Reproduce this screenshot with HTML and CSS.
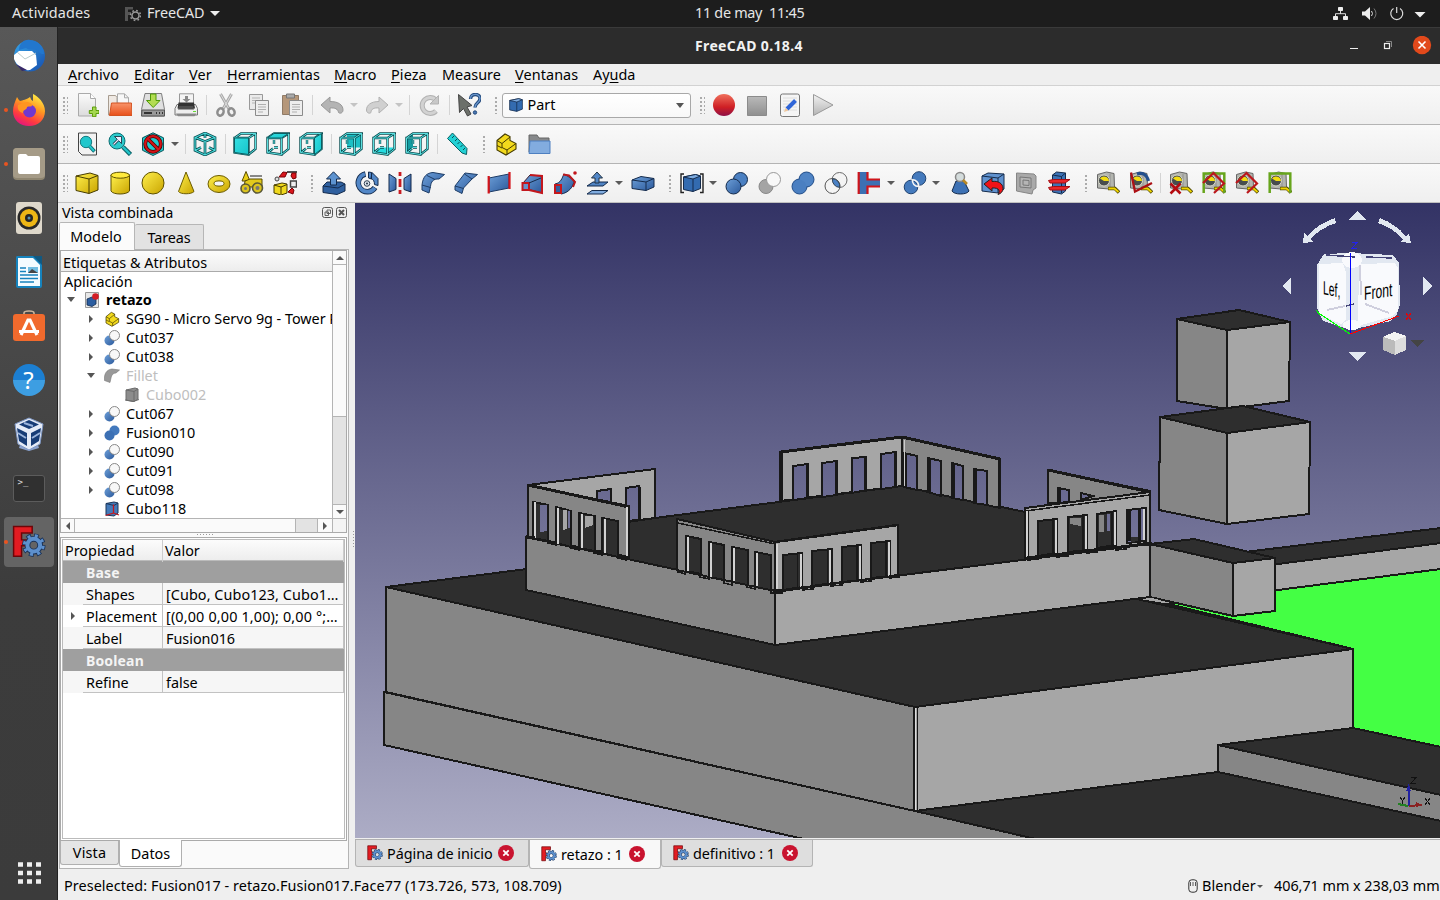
FILE: index.html
```html
<!DOCTYPE html>
<html lang="es">
<head>
<meta charset="utf-8">
<title>FreeCAD 0.18.4</title>
<link rel="stylesheet" href="styles.css">
</head>
<body>
<svg class="defs" width="0" height="0" aria-hidden="true">
<defs>
<linearGradient id="gy" x1="0" y1="0" x2="1" y2="1"><stop offset="0" stop-color="#fff04d"/><stop offset="1" stop-color="#c9a400"/></linearGradient>
<linearGradient id="gb" x1="0" y1="0" x2="1" y2="1"><stop offset="0" stop-color="#6d9fd8"/><stop offset="1" stop-color="#2b599b"/></linearGradient>
<linearGradient id="gt" x1="0" y1="0" x2="1" y2="1"><stop offset="0" stop-color="#34e0e2"/><stop offset="1" stop-color="#16c4cb"/></linearGradient>
<linearGradient id="gr" x1="0" y1="0" x2="0" y2="1"><stop offset="0" stop-color="#f0705c"/><stop offset=".6" stop-color="#cf1f24"/><stop offset="1" stop-color="#8d1048"/></linearGradient>
<linearGradient id="gg" x1="0" y1="0" x2="0" y2="1"><stop offset="0" stop-color="#f2f2f2"/><stop offset="1" stop-color="#b4b4b4"/></linearGradient>
<linearGradient id="gw" x1="0" y1="0" x2="0" y2="1"><stop offset="0" stop-color="#fbfbfb"/><stop offset="1" stop-color="#dcdcdc"/></linearGradient>
<linearGradient id="gd" x1="0" y1="0" x2="0" y2="1"><stop offset="0" stop-color="#b9b9b9"/><stop offset="1" stop-color="#8f8f8f"/></linearGradient>
<linearGradient id="go" x1="0" y1="0" x2="0" y2="1"><stop offset="0" stop-color="#f8956b"/><stop offset="1" stop-color="#e8501a"/></linearGradient>
<linearGradient id="gfx" x1=".8" y1="0" x2=".3" y2="1"><stop offset="0" stop-color="#fff44a"/><stop offset=".4" stop-color="#ff9a22"/><stop offset=".75" stop-color="#ff3b3f"/><stop offset="1" stop-color="#e31580"/></linearGradient>
<linearGradient id="gtb" x1="0" y1="0" x2="1" y2="1"><stop offset="0" stop-color="#35a5ea"/><stop offset="1" stop-color="#174fae"/></linearGradient>

<symbol id="i-new" viewBox="0 0 24 24"><path d="M3.500.5h12l5 5v17.500h-17z" fill="url(#gw)" stroke="#aaa"/><path d="M15.500.5v5h5" fill="#fff" stroke="#aaa"/><path d="M17.500 14h3.500v3.500h3v3h-3v3.200h-3.500v-3.200h-3.200v-3h3.200z" fill="#a5d84f" stroke="#5d9e0c"/></symbol>
<symbol id="i-open" viewBox="0 0 24 24"><path d="M.5 22V2.500h7l1.500 2v17z" fill="#efe9e3" stroke="#a79c90"/><path d="M9.500 10V.8h7l4 4V12z" fill="#f8f8f8" stroke="#aaa"/><path d="M16.500.8v4h4" fill="none" stroke="#aaa"/><path d="M1.500 22.500l2-12.500h20l.5 12.500z" fill="url(#go)" stroke="#d45321"/></symbol>
<symbol id="i-save" viewBox="0 0 24 24"><path d="M4 .5h16.500l3 16v6.500H.5v-6.500z" fill="#e0e0e0" stroke="#7e7e7e"/><path d="M1 17h22.500v6H.5z" fill="#9a9a9a" stroke="#555"/><path d="M3 20h8m4 0h1m2 0h1m2 0h1" stroke="#333" stroke-width="2"/><path d="M9.500 1h5.500v6.500h4L12.200 14.500 5.500 7.500h4z" fill="#b3dc52" stroke="#4e9a06"/></symbol>
<symbol id="i-print" viewBox="0 0 24 24"><path d="M5.500.8h14V13h-14z" fill="#f4f4f4" stroke="#999"/><path d="M11 3h3v3h2.500l-4 3.500-4-3.500H11z" fill="#888"/><path d="M3 11.500h18.500l2 4v6.500H1v-6.500z" fill="#eee" stroke="#777"/><path d="M4.500 9.500h15.500l1 6H3.500z" fill="#333"/><path d="M5 13h14l1 3.500H4z" fill="#4e4e4e"/><path d="M2 20.500h20.500l-2 2.700H4z" fill="#888"/><path d="M19 18.500h3" stroke="#6d3"/></symbol>
<symbol id="i-cut" viewBox="0 0 24 24"><path d="M6.500 1l8.500 15M17.500 1L9 16" stroke="#a9a9a9" stroke-width="3" fill="none"/><path d="M6.500 1l8.500 15M17.500 1L9 16" stroke="#dcdcdc" stroke-width="1"/><g fill="none" stroke="#8d8d8d" stroke-width="2.500"><ellipse cx="6.500" cy="19" rx="3" ry="3.700" transform="rotate(20 6.500 19)"/><ellipse cx="17.500" cy="19" rx="3" ry="3.700" transform="rotate(-20 17.500 19)"/></g></symbol>
<symbol id="i-copy" viewBox="0 0 24 24"><path d="M2.500 1.500h13v15h-13z" fill="#eaeaea" stroke="#999"/><path d="M5 5h8M5 7.500h8M5 10h8" stroke="#b5b5b5"/><path d="M8.500 7.500h13v15h-13z" fill="#eee" stroke="#8b8b8b"/><path d="M11 11.500h8M11 14h8M11 16.500h8M11 19h5" stroke="#b0b0b0"/></symbol>
<symbol id="i-paste" viewBox="0 0 24 24"><path d="M2.500 2.500h16v19h-16z" fill="#b5977a" stroke="#8f7a66"/><path d="M6.500 1h8v4h-8z" fill="#aaa" stroke="#777"/><path d="M9.500 7.500h13v15h-13z" fill="#eee" stroke="#8b8b8b"/><path d="M12 11.500h8M12 14h8M12 16.500h8M12 19h5" stroke="#b0b0b0"/></symbol>
<symbol id="i-undo" viewBox="0 0 24 24"><path d="M1 12l9-8v4.500c8 0 13 3 13 8.500 0 3-3 4-4.500 2.500C18 16 15 14.500 10 15v5z" fill="#b4b4b4" stroke="#999"/></symbol>
<symbol id="i-redo" viewBox="0 0 24 24"><path d="M23 12l-9-8v4.500C6 8.500 1.500 12 1.500 17c0 3 3 4 4.500 2.500C6 16 9 14.500 14 15v5z" fill="#d0d0d0" stroke="#b1b1b1"/></symbol>
<symbol id="i-refresh" viewBox="0 0 24 24"><path d="M19 7A8 8 0 1 0 19 18" fill="none" stroke="#b2b2b2" stroke-width="5"/><path d="M19 7A8 8 0 1 0 19 18" fill="none" stroke="#d2d2d2" stroke-width="3"/><path d="M21.500 2.500v8.500h-8.500z" fill="#c8c8c8" stroke="#b2b2b2"/></symbol>
<symbol id="i-what" viewBox="0 0 24 24"><path d="M1.500 1.500l13.500 11-5 1.500 4 7-3.500 2-4-7.500-4 4z" fill="#6c706a" stroke="#444"/><path d="M13.500 6c0-6 9.500-6 9.500-.5 0 4.500-5 4-5 9" fill="none" stroke="#234a7d" stroke-width="3.400"/><path d="M13.500 6c0-6 9.500-6 9.500-.5 0 4.500-5 4-5 9" fill="none" stroke="#6a97cd" stroke-width="1.300"/><circle cx="18" cy="19.500" r="1.700" fill="#4a78b5" stroke="#234a7d"/></symbol>
<symbol id="i-rec" viewBox="0 0 24 24"><circle cx="12" cy="12" r="11" fill="url(#gr)"/></symbol>
<symbol id="i-stop" viewBox="0 0 24 24"><path d="M2.500 3.500h19v19h-19z" fill="url(#gd)" stroke="#8b8b8b"/></symbol>
<symbol id="i-edit" viewBox="0 0 24 24"><rect x="2.500" y="1" width="19" height="22.500" rx="2" fill="#f5f5f5" stroke="#777"/><path d="M5 5h14M5 8h14M5 11h14M5 14h14M5 17h14" stroke="#dedede"/><path d="M9 16L17.500 7.500" stroke="#2f65d8" stroke-width="4"/><path d="M10.500 17.500L6 19l1.500-4z" fill="#efc79b"/></symbol>
<symbol id="i-play" viewBox="0 0 24 24"><path d="M2.500 1.500L22 12 2.500 22.500z" fill="url(#gg)" stroke="#999"/></symbol>

<symbol id="i-fit" viewBox="0 0 24 24"><path d="M3.500 1h18v22H7l-3.500-3.500z" fill="#f2f2f2" stroke="#444"/><circle cx="11" cy="10" r="5.700" fill="#21c7cc" stroke="#127b80"/><path d="M14.500 14l5 5.500" stroke="#0b6569" stroke-width="3.600"/><path d="M14.500 14l4.500 5" stroke="#21c7cc" stroke-width="2"/></symbol>
<symbol id="i-sel" viewBox="0 0 24 24"><circle cx="9" cy="9" r="8" fill="#2bcacc" stroke="#0d6e73"/><path d="M15 15l7.500 7.500" stroke="#0d6267" stroke-width="4.500"/><path d="M15 15l7 7" stroke="#20c4c8" stroke-width="2.400"/><path d="M5.500 12.500l5-5" stroke="#123" stroke-width="2.600"/><path d="M6.500 4.500h7v7z" fill="#eef" stroke="#123" stroke-width=".8"/><path d="M5.500 12.500l5-5" stroke="#eef" stroke-width="1.200"/></symbol>
<symbol id="i-nodraw" viewBox="0 0 24 24"><path d="M12 .8l10.500 5v12.500L12 23.500 1.500 18.300V5.800z" fill="#22c8cd" stroke="#0b555a"/><circle cx="12" cy="12" r="7.800" fill="none" stroke="#4b0000" stroke-width="3.800"/><path d="M6.500 6.500l11 11" stroke="#4b0000" stroke-width="3.800"/><circle cx="12" cy="12" r="7.800" fill="none" stroke="#d31217" stroke-width="2.200"/><path d="M6.500 6.500l11 11" stroke="#d31217" stroke-width="2.200"/></symbol>
<symbol id="i-iso" viewBox="0 0 24 24"><path d="M12 1l10 4.500v13l-10 4.500-10-4.500v-13zM2 5.500l10 4 10-4M12 9.500V23M2 18.500l6-3M22 18.500l-6-3M12 1v5" fill="none" stroke="#0a4e52" stroke-width="2.700"/><path d="M12 1l10 4.500v13l-10 4.500-10-4.500v-13zM2 5.500l10 4 10-4M12 9.500V23M2 18.500l6-3M22 18.500l-6-3M12 1v5" fill="none" stroke="#4bdcdc" stroke-width="1.100"/></symbol>
<symbol id="wire" viewBox="0 0 24 24"><path id="wp" d="M1.500 6h14v16.500l-14-2zM1.500 6L8 1.500h14.500L15.500 6M22.500 1.500V17l-7 5.500M8 8v4M8 15.500h4M7 16.500l-5 4" fill="none" stroke="#0a4e52" stroke-width="2.400"/><path d="M1.500 6h14v16.500l-14-2zM1.500 6L8 1.500h14.500L15.500 6M22.500 1.500V17l-7 5.500M8 8v4M8 15.500h4M7 16.500l-5 4" fill="none" stroke="#5be0e0" stroke-width="1"/></symbol>
<symbol id="i-front" viewBox="0 0 24 24"><use href="#wire"/><path d="M1.500 6h14v16.500l-14-2z" fill="url(#gt)" stroke="#0a5e62"/></symbol>
<symbol id="i-top" viewBox="0 0 24 24"><use href="#wire"/><path d="M1.500 6L8 1.500h14.500L15.500 6z" fill="url(#gt)" stroke="#0a5e62"/></symbol>
<symbol id="i-right" viewBox="0 0 24 24"><use href="#wire"/><path d="M22.500 1.500V17l-7 5.500V6z" fill="url(#gt)" stroke="#0a5e62"/></symbol>
<symbol id="i-rear" viewBox="0 0 24 24"><path d="M8 2h14v13.500H8z" fill="#1bc0c5"/><use href="#wire"/></symbol>
<symbol id="i-bottom" viewBox="0 0 24 24"><path d="M8 15.500h14l-6.500 6.500-14-2z" fill="#25dce0"/><use href="#wire"/></symbol>
<symbol id="i-left" viewBox="0 0 24 24"><path d="M1.500 6L8 1.500v14l-6.500 5z" fill="#139da2"/><use href="#wire"/></symbol>
<symbol id="i-ruler" viewBox="0 0 24 24"><path d="M7.500 1L22 16.500 21.500 22.500 17 21 2.500 6.500z" fill="#22d0d4" stroke="#0a6064"/><path d="M9 4L7 6M12 7l-2 2M14.500 10l-2 2M17.500 13l-2 2M20 16l-2 2" stroke="#0a4e52"/></symbol>
<symbol id="i-part" viewBox="0 0 24 24"><path d="M3 8.500l8-6.500 5 2.500v4l6 3v5.500l-10 6-9-5z" fill="#f2d91c" stroke="#453b00" stroke-width="1.100"/><path d="M3 8.500l5 3 8-6.500M8 11.500v4l5 2.500 9-6.500M3 13.500l5 2.500M13 18v4.500" fill="none" stroke="#453b00"/></symbol>
<symbol id="i-group" viewBox="0 0 24 24"><path d="M2 3h8l2 3h10v14H2z" fill="#87898b" stroke="#666"/><path d="M3 9h20v12.500H2z" fill="#82acdf" stroke="#4d7fc0"/></symbol>

<symbol id="i-ybox" viewBox="0 0 24 24"><path d="M1 5l14-3 8 2.500V19l-9 3.500L1 19.500z" fill="url(#gy)" stroke="#463c00"/><path d="M1 5l13 3 9-3.500M14 8v14" fill="none" stroke="#463c00"/></symbol>
<symbol id="i-cyl" viewBox="0 0 24 24"><path d="M3 4v16c2 4 16 4 18.500 0V4z" fill="url(#gy)" stroke="#5e5100"/><ellipse cx="12.200" cy="4.200" rx="9.300" ry="3" fill="#ffea3c" stroke="#5e5100"/></symbol>
<symbol id="i-sph" viewBox="0 0 24 24"><circle cx="12" cy="12" r="11" fill="url(#gy)" stroke="#5e5100"/></symbol>
<symbol id="i-cone" viewBox="0 0 24 24"><path d="M12 1L4.500 20.500c2 3 13 3 15.500 0z" fill="url(#gy)" stroke="#6b5c00"/></symbol>
<symbol id="i-torus" viewBox="0 0 24 24"><ellipse cx="12" cy="13" rx="11" ry="8.500" fill="url(#gy)" stroke="#6b5c00"/><ellipse cx="12" cy="12.500" rx="5" ry="2.600" fill="#f6f6f6" stroke="#6b5c00"/></symbol>
<symbol id="i-prim" viewBox="0 0 24 24"><path d="M6 .5L2 10h8z" fill="#e9cf18" stroke="#574b00"/><path d="M10 5h12" stroke="#888" stroke-width="2"/><path d="M10 8h12v8H4l1-6z" fill="#e3ca1c" stroke="#574b00"/><g fill="#dcc41d" stroke="#5b5938" stroke-width="1.600"><circle cx="5.500" cy="17.500" r="4.500"/><circle cx="17.500" cy="17" r="5"/></g><circle cx="17.500" cy="17" r="2" fill="#777"/><circle cx="5.500" cy="17.500" r="1.500" fill="#777"/></symbol>
<symbol id="i-shape" viewBox="0 0 24 24"><path d="M1 14l8-2 5 1v9l-6 2-7-2z" fill="#f0d91e" stroke="#463c00"/><path d="M1 14l7 2 6-2.500M8 16v7" fill="none" stroke="#463c00"/><path d="M14 1h10" stroke="#333" stroke-width="1.700"/><path d="M17.500 10h6v6h-6z" fill="#eee" stroke="#444" stroke-width="1.500"/><circle cx="4" cy="8" r="2" fill="#ddd" stroke="#444"/><path d="M6 6l4-5 4 .5-2 4.500zM19 2h4v5l-3 1-2-3zM15 21l4-4 2 2-1 4z" fill="#d9161c" stroke="#7a0004"/></symbol>
<symbol id="i-extrude" viewBox="0 0 24 24"><path d="M1 15l4-4h14l4 2v7l-8 3.500-14-2z" fill="#2f609f" stroke="#142b4c"/><path d="M1 15l15 2 7-4" fill="none" stroke="#142b4c"/><path d="M8.500 14V8H4.500L11.500 .8 18.500 8h-4v6z" fill="#5d93d0" stroke="#142b4c"/></symbol>
<symbol id="i-revolve" viewBox="0 0 24 24"><path d="M10.500 3A9 9 0 1 0 20 16.500" fill="none" stroke="#142b4c" stroke-width="5.500"/><path d="M10 3A9 9 0 1 0 19.800 16.800" fill="none" stroke="#5287c7" stroke-width="3.800"/><path d="M13.500 1l3 .5V8l-3-1zM17 1.500l6 6v7l-3.500-1c0-3-1-5-3.500-6z" fill="#5287c7" stroke="#142b4c"/><circle cx="12" cy="12.500" r="2.800" fill="#dfe6ee" stroke="#345"/><circle cx="12" cy="12.500" r="1" fill="#234"/></symbol>
<symbol id="i-mirror" viewBox="0 0 24 24"><path d="M1 3l7 4.500v11L1 21z" fill="url(#gb)" stroke="#142b4c"/><path d="M23 3l-7 4.500v11l7 2.500z" fill="url(#gb)" stroke="#142b4c"/><path d="M12 1v4M12 8v8M12 19v4" stroke="#c81b20" stroke-width="2.800"/></symbol>
<symbol id="i-fillet" viewBox="0 0 24 24"><path d="M1 14C2 5 6 2 12 1.500L23.500 3.500 18 8c-6-.5-8 3-8.500 7.500L8 22l-7-3z" fill="url(#gb)" stroke="#1d3c66"/><path d="M1 14l8.500 2.500M6 4.500l8 4" stroke="#1d3c66" fill="none"/></symbol>
<symbol id="i-chamfer" viewBox="0 0 24 24"><path d="M1 15L11 2l12.500 1.500L18 8 9.500 17 8 22.500 1 19z" fill="url(#gb)" stroke="#1d3c66"/><path d="M1 15l8.500 2.500M10.500 3L18 8" stroke="#1d3c66" fill="none"/></symbol>
<symbol id="i-ruled" viewBox="0 0 24 24"><path d="M2 7l20-4v14L2 21z" fill="url(#gb)" stroke="#1d3c66"/><path d="M1.700 5v17.500M22.500 1v17" stroke="#d4151b" stroke-width="2.200"/></symbol>
<symbol id="i-loft" viewBox="0 0 24 24"><path d="M3 12l7-8 12 1v17l-15-4z" fill="url(#gb)" stroke="#3d1a2c"/><path d="M10 4l12 1v17l-13-3" fill="none" stroke="#c3171d" stroke-width="2"/><path d="M2.500 12h6.500v7h-6.500z" fill="#6794cb" stroke="#c3171d" stroke-width="2"/><path d="M9 12l12-5" stroke="#142b4c"/></symbol>
<symbol id="i-sweep" viewBox="0 0 24 24"><path d="M2 13C8 12 9 7 11 3l10 6c0 7-6 13-13 14z" fill="url(#gb)" stroke="#142b4c"/><path d="M2 14h6v8H2z" fill="#335f9e" stroke="#c3171d" stroke-width="2"/><path d="M10 3.500l6 1 6 6.500-2 5" fill="none" stroke="#b9181e" stroke-width="2"/><circle cx="22" cy="2" r="1.800" fill="#c3171d"/></symbol>
<symbol id="i-offset" viewBox="0 0 24 24"><path d="M1 15l6-4h15l-5 4z" fill="#4f83c3" stroke="#142b4c"/><path d="M1 23l5-3.500h16L17 23z" fill="#80acdf" stroke="#142b4c"/><path d="M9 12V7H5.500L11 1l5.500 6H13v5z" fill="#5287c7" stroke="#234"/></symbol>
<symbol id="i-thick" viewBox="0 0 24 24"><path d="M1 9l9-3.500 13 2V16l-8 3.500-14-2z" fill="url(#gb)" stroke="#142b4c"/><path d="M1 9l14 2 8-3.500M15 11v8.500" fill="none" stroke="#142b4c"/></symbol>
<symbol id="i-bbox" viewBox="0 0 24 24"><path d="M3.500 6l12-2.500 5 1.500v12.500L13 20.500l-9.500-2z" fill="#336bb0" stroke="#142b4c"/><path d="M3.500 6l12-2.500L20.500 5 13 8z" fill="#7dabe0" stroke="#142b4c"/><path d="M13 8v12.500" stroke="#142b4c"/></symbol>
<symbol id="i-compound" viewBox="0 0 24 24"><use href="#i-bbox"/><path d="M4 3H1v18.500h3M20 3h3v18.500h-3" fill="none" stroke="#222" stroke-width="1.400"/></symbol>
<symbol id="i-bool" viewBox="0 0 24 24"><circle cx="15.500" cy="8.500" r="7" fill="#4b80c2" stroke="#142b4c"/><circle cx="8.500" cy="15.500" r="7.500" fill="url(#gb)" stroke="#142b4c"/></symbol>
<symbol id="i-cutg" viewBox="0 0 24 24"><circle cx="8" cy="15.500" r="7" fill="#a4a4a4" stroke="#888"/><circle cx="15.500" cy="8.500" r="7" fill="#f8f8f8" stroke="#999"/></symbol>
<symbol id="i-fuse" viewBox="0 0 24 24"><circle cx="15.500" cy="8.500" r="7.500" fill="#3f72b4" stroke="#24508b"/><circle cx="8.500" cy="15.500" r="7.500" fill="#3f72b4" stroke="#24508b"/><circle cx="15.500" cy="8.500" r="6.800" fill="#4f84c5"/><circle cx="8.500" cy="15.500" r="6.800" fill="#4a7fc1"/></symbol>
<symbol id="i-common" viewBox="0 0 24 24"><circle cx="15.500" cy="9" r="7.500" fill="#f4f4f4" stroke="#6a6a6a"/><circle cx="8.500" cy="15" r="7.500" fill="#f4f4f4" stroke="#555"/><path d="M8.500 7.700a7.500 7.500 0 0 1 7.200 8.700 7.500 7.500 0 0 1-7.200-8.700z" fill="#4a80c4" stroke="#345"/></symbol>
<symbol id="i-connect" viewBox="0 0 24 24"><path d="M1.500 1v22h9v-7.500H23V8H10.500V1z" fill="#3c70b3"/><path d="M1.700 1v22M10.500 1v7.500H23M10.500 23v-7.500H23" fill="none" stroke="#cf151b" stroke-width="2.200"/></symbol>
<symbol id="i-split" viewBox="0 0 24 24"><circle cx="16" cy="7.500" r="6.800" fill="#447abd" stroke="#1f4270"/><circle cx="8" cy="16" r="6.800" fill="#447abd" stroke="#1f4270"/><path d="M8.500 9c4-1 8 3 7 7M9.500 8.500a6 6 0 0 0 6 7" fill="none" stroke="#f5f5f5" stroke-width="1.600"/></symbol>
<symbol id="i-check" viewBox="0 0 24 24"><path d="M8 10h8l5 10c-2 4-15 4-17 0z" fill="#3d71b4" stroke="#142b4c"/><circle cx="12" cy="6" r="4.500" fill="#d4dcdc" stroke="#888" stroke-width="1.500"/><path d="M15 9l4 4" stroke="#b98a24" stroke-width="2.500"/></symbol>
<symbol id="i-defeat" viewBox="0 0 24 24"><path d="M1 5l6-3 16 1v15l-6 4-16-2z" fill="#6092cf" stroke="#142b4c"/><path d="M1 5l16 2 6-4M17 7v15" stroke="#142b4c" fill="none"/><path d="M3 13l8-6v3.500c6-1 11 2 11 7 0 3-2 5-5 6 2-3 2-7-6-6.500V20z" fill="#f01318" stroke="#222"/></symbol>
<symbol id="i-section" viewBox="0 0 24 24"><path d="M2.500 2L20 3l2 2v12l-3 2-1 4-15.500-3z" fill="#a9a9a9" stroke="#868686"/><path d="M6 6l11 1v10L6 16zM9 9l6 .5v5L9 14z" fill="#b5b5b5" stroke="#777"/></symbol>
<symbol id="i-slices" viewBox="0 0 24 24"><path d="M5.500 4l4-3 9 1v18l-4 3-9-2z" fill="#3c72b5" stroke="#142b4c"/><path d="M5.500 4l9 1.500 4-3.500M14.500 5.500V22" fill="none" stroke="#142b4c"/><path d="M1.500 9.500l5-1h16.500l-5 3.500H3zM1.500 16.500l5-1h16.500l-5 3.500H3z" fill="#e8262b" stroke="#a60f13"/></symbol>
<symbol id="i-tape" viewBox="0 0 24 24"><path d="M1.500 3.500l9-2.500 7.500 1.500.5 14L13 18l-11.500-1z" fill="#b3b5af" stroke="#666"/><path d="M14 3v14" stroke="#888" stroke-width=".8"/><circle cx="8" cy="9.500" r="5.500" fill="#474d4e" stroke="#d9d9c8"/><path d="M4 7.500a5 5 0 0 1 9 2.500H8z" fill="#f3dc12"/><path d="M12 17.500h7l4 4" fill="none" stroke="#4f4800" stroke-width="3.500"/><path d="M12.500 17.500h6l4 3.500" fill="none" stroke="#f0d400" stroke-width="1.800"/></symbol>
<symbol id="i-tape2" viewBox="0 0 24 24"><use href="#i-tape"/><path d="M8 3c6-2 10 1 11.500 7" fill="none" stroke="#234f8d" stroke-width="3.200"/><path d="M2 1.500l4 19L23 12" fill="none" stroke="#ac1015" stroke-width="2.300"/></symbol>
<symbol id="i-tapex" viewBox="0 0 24 24"><use href="#i-tape"/><path d="M1.500 12.500l10 10M11.500 12.500l-10 10" stroke="#b50c11" stroke-width="2.600"/></symbol>
<symbol id="i-tapea" viewBox="0 0 24 24"><use href="#i-tape"/><path d="M1.700 22V2.500h20.600V22" fill="none" stroke="#67a51c" stroke-width="2.500"/><path d="M1 12L11.500 2 22 12.500 12 22" fill="none" stroke="#bb171c" stroke-width="2.200"/></symbol>
<symbol id="i-tapeb" viewBox="0 0 24 24"><use href="#i-tape"/><path d="M1 12L11.500 2 22 12.500 12 22" fill="none" stroke="#bb171c" stroke-width="2.200"/></symbol>
<symbol id="i-tapec" viewBox="0 0 24 24"><use href="#i-tape"/><path d="M1.700 22V2.500h20.600V22" fill="none" stroke="#67a51c" stroke-width="2.500"/></symbol>

<symbol id="t-cut" viewBox="0 0 16 16"><circle cx="5.500" cy="10.500" r="5" fill="url(#gb)"/><circle cx="10.500" cy="5.500" r="5" fill="#f8f8f8" stroke="#888"/></symbol>
<symbol id="t-fuse" viewBox="0 0 16 16"><circle cx="10.500" cy="5.500" r="5" fill="#4379bd"/><circle cx="5.500" cy="10.500" r="5" fill="#3c70b4"/></symbol>
<symbol id="t-filletg" viewBox="0 0 16 16"><path d="M.5 9C1 4 4 1.500 8 1L15.500 2 12 5C9 5 7.500 7 7 10l-1 4.500L.5 12.500z" fill="#999" stroke="#777" stroke-width=".6"/></symbol>
<symbol id="t-boxg" viewBox="0 0 16 16"><path d="M2 3l9-2 3 1v10l-4 2.500L2 13z" fill="#8c8c8c" stroke="#6b6b6b"/><path d="M2 3l8 1.500L14 2M10 4.500v9M1 13l8 1.500 6-2" stroke="#6b6b6b" fill="none"/></symbol>
<symbol id="t-boxr" viewBox="0 0 16 16"><path d="M2 2.500l8-1.500 4 1v10l-4 3-8-1z" fill="#447ab9" stroke="#1b3559"/><path d="M2 2.500l8 2 4-2.500" fill="none" stroke="#1b3559"/><path d="M9.500 3.500v8.500L1.500 14.500M9.500 12l5.500 2" stroke="#c01920" stroke-width="1.300" fill="none"/></symbol>
<symbol id="t-doc" viewBox="0 0 16 16"><path d="M1.500.5h13v15h-13z" fill="#e8e8e8" stroke="#999"/><path d="M3 7l5-2 4 1.500V12l-4 2.500-5-1.500z" fill="#2b5da0" stroke="#142b4c" stroke-width=".8"/><circle cx="11.500" cy="4.500" r="3.300" fill="#d31d25"/></symbol>
<symbol id="fc" viewBox="0 0 32 32"><path d="M1.500 1.500h17.500v6H9v6.500h6.500v5.500H9v10H1.500z" fill="#e31c22" stroke="#6e0508" stroke-width="1.400"/><g fill="none" stroke="#1b3358"><circle cx="20.500" cy="19" r="6" stroke-width="5.500"/><circle cx="20.500" cy="19" r="8.800" stroke-width="4.600" stroke-dasharray="4.200 2.711"/></g><g fill="none" stroke="#5d90cd"><circle cx="20.500" cy="19" r="6" stroke-width="3.700"/><circle cx="20.500" cy="19" r="8.800" stroke-width="3" stroke-dasharray="2.800 4.111" stroke-dashoffset="-.7"/></g></symbol>
<symbol id="fcg" viewBox="0 0 16 16"><path d="M0 1h8v2.500H3V6h3v3H3v6H0z" fill="#555"/><circle cx="10.500" cy="9.500" r="3.500" fill="none" stroke="#999" stroke-width="1.500"/><circle cx="10.500" cy="9.500" r="5" fill="none" stroke="#999" stroke-width="1.500" stroke-dasharray="1.700 2.230"/></symbol>
<symbol id="close" viewBox="0 0 16 16"><circle cx="8" cy="8" r="8" fill="#c9132f"/><path d="M5.300 5.300l5.400 5.400M10.700 5.300l-5.400 5.400" stroke="#fff" stroke-width="1.800"/></symbol>
</defs>
</svg>

<header class="topbar">
  <span class="activities">Actividades</span>
  <svg class="appicon" width="16" height="16"><use href="#fcg"/></svg>
  <span class="appname">FreeCAD</span><i class="tri light"></i>
  <span class="clock">11 de may&nbsp; 11:45</span>
  <svg class="tray" width="100" height="20" viewBox="0 0 100 20"><g fill="#eee"><rect x="11" y="3" width="5" height="4" rx=".8"/><rect x="6" y="12" width="5" height="4" rx=".8"/><rect x="16" y="12" width="5" height="4" rx=".8"/><path d="M35 7.500h3L43 3v13l-5-4.500h-3z"/><path d="M87.500 8h11L93 13.500z"/></g><path d="M13.500 7v3M8.500 12V9.700h10V12M44.500 7q2 2.500 0 5" fill="none" stroke="#ddd"/><path d="M47 4.500q4 5 0 10" fill="none" stroke="#777"/><path d="M66.500 4.500a6 6 0 1 0 6.500 0M69.700 3v6" fill="none" stroke="#ddd" stroke-width="1.200"/></svg>
</header>

<div class="desktop">
<nav class="dock">
  <div class="app"><svg width="34" height="34" viewBox="0 0 34 34"><circle cx="17.500" cy="17" r="15.500" fill="url(#gtb)"/><path d="M7 11C7 3 14 0 18 1c7 0 14 6 14 14-3 0-5 0-5-3-4-3-10 0-13-3z" fill="#2277ce"/><path d="M2 16l5-4 13 0 4 4 1 10-7 5C11 32 5 27 2 20z" fill="#fff"/><path d="M5 13l8 7 11-6" fill="none" stroke="#bcc"/><path d="M4 25l11 6-5 1z" fill="#372868"/></svg></div>
  <div class="app run"><svg width="34" height="34" viewBox="0 0 34 34"><path d="M18 4c1 2 1 3 3 4V1c5 2 12 9 12 17 0 9-7 15-16 15S1 27 1 18C1 13 3 9 5 4c1 2 2 3 3 4 3-1 6-1 10-4z" fill="url(#gfx)"/><circle cx="17.500" cy="18" r="6.500" fill="#7138d0"/><path d="M6 12l8-3c4 0 6 2 6 4-2 1-3 0-5 1 0 3-4 2-4 6-4-1-6-4-5-8z" fill="#ff9521"/></svg></div>
  <div class="app run"><svg width="34" height="34" viewBox="0 0 34 34"><rect x="1" y="1" width="32" height="32" rx="4" fill="#8f8671"/><rect x="1" y="1" width="32" height="30" rx="4" fill="#a59b87"/><path d="M6 9q0-2 2-2h6l2 2h10q2 0 2 2v14q0 2-2 2H8q-2 0-2-2z" fill="#fff"/></svg></div>
  <div class="app"><svg width="34" height="34" viewBox="0 0 34 34"><rect x="4" y="1" width="26" height="32" rx="3" fill="#ded8cb"/><circle cx="17" cy="17" r="11.500" fill="#272727"/><circle cx="17" cy="17" r="9" fill="#edb615"/><circle cx="17" cy="17" r="4" fill="#252525"/><circle cx="17" cy="17" r="1.500" fill="#5791b0"/></svg></div>
  <div class="app"><svg width="34" height="34" viewBox="0 0 34 34"><path d="M5 1h17l8 8v22q0 2-2 2H6q-2 0-2-2V3q0-2 1-2z" fill="#1683bd"/><path d="M6 3h15l7 7v21H6z" fill="#f4fbff"/><path d="M21 1h9v9z" fill="#105982"/><path d="M8 13h6M8 16.500h6M8 20h18M8 23.500h18M8 27h14" stroke="#1683bd" stroke-width="1.600"/><path d="M16 12h10v6H16z" fill="#72bde2"/><path d="M16 18l4-4 6 4z" fill="#444"/></svg></div>
  <div class="app"><svg width="34" height="34" viewBox="0 0 34 34"><path d="M12 6V4q0-2 5-2t5 2v2" fill="none" stroke="#ccb59c" stroke-width="1.600"/><rect x="1" y="5" width="32" height="27" rx="3" fill="#f16a2d"/><path d="M9 26l7-15h2l7 15M7 22.500h20" fill="none" stroke="#fff" stroke-width="3.200"/></svg></div>
  <div class="app help"><span>?</span></div>
  <div class="app"><svg width="34" height="34" viewBox="0 0 34 34"><path d="M9 25h16l2 6-10 3-10-3z" fill="#8ba2ce"/><path d="M3 7L17 1l14 6-3 20-11 6-11-6z" fill="#e5ebf7" stroke="#7f98c5"/><path d="M7 7.500L17 3l10 4.500L17 12zM5 11l10 5v13l-8-5zM29 11l-10 5v13l8-5z" fill="#173c76"/><path d="M6 16l8 5M28 16l-8 5M12 6l9 3" stroke="#9bb4dc" stroke-width="2"/></svg></div>
  <div class="app term"><span>&gt;_</span></div>
  <div class="app run active"><svg width="34" height="34"><use href="#fc"/></svg></div>
  <svg class="grid" width="24" height="24" viewBox="0 0 24 24"><path d="M1 3.500h5m4 0h5m4 0h5M1 12h5m4 0h5m4 0h5M1 20.500h5m4 0h5m4 0h5" stroke="#eee" stroke-width="4.500"/></svg>
</nav>

<main class="window">
  <div class="titlebar"><b>FreeCAD 0.18.4</b><svg class="winbtns" width="92" height="20" viewBox="0 0 92 20"><path d="M2 12.500h8" stroke="#eee"/><rect x="36.500" y="7.500" width="5" height="5" fill="none" stroke="#eee" stroke-width="1.200"/><path d="M38 5.500h5.500V11" stroke="#888" fill="none"/><circle cx="74" cy="9" r="9.200" fill="#e2491b"/><path d="M70.500 5.500l7 7M77.500 5.500l-7 7" stroke="#fff" stroke-width="1.600"/></svg></div>
  <div class="menubar"><span class="m1"><u>A</u>rchivo</span><span class="m2"><u>E</u>ditar</span><span class="m3"><u>V</u>er</span><span class="m4"><u>H</u>erramientas</span><span class="m5"><u>M</u>acro</span><span class="m6"><u>P</u>ieza</span><span class="m7">Measure</span><span class="m8"><u>V</u>entanas</span><span class="m9">Ay<u>u</u>da</span></div>

  <div class="toolbar">
    <i class="grip first"></i><svg><use href="#i-new"/></svg><svg><use href="#i-open"/></svg><svg><use href="#i-save"/></svg><svg><use href="#i-print"/></svg><i class="sep"></i><svg><use href="#i-cut"/></svg><svg><use href="#i-copy"/></svg><svg><use href="#i-paste"/></svg><i class="sep"></i><svg><use href="#i-undo"/></svg><i class="dd off"></i><svg><use href="#i-redo"/></svg><i class="dd off"></i><i class="sep"></i><svg><use href="#i-refresh"/></svg><i class="sep"></i><svg><use href="#i-what"/></svg><i class="grip"></i>
    <div class="combo"><svg><use href="#i-bbox"/></svg><span>Part</span><i class="tri"></i></div>
    <i class="grip last"></i><svg><use href="#i-rec"/></svg><svg><use href="#i-stop"/></svg><svg><use href="#i-edit"/></svg><svg><use href="#i-play"/></svg>
  </div>
  <div class="toolbar second">
    <i class="grip first"></i><svg><use href="#i-fit"/></svg><svg><use href="#i-sel"/></svg><svg><use href="#i-nodraw"/></svg><i class="dd"></i><i class="sep"></i><svg><use href="#i-iso"/></svg><i class="sep"></i><svg><use href="#i-front"/></svg><svg><use href="#i-top"/></svg><svg><use href="#i-right"/></svg><i class="sep"></i><svg><use href="#i-rear"/></svg><svg><use href="#i-bottom"/></svg><svg><use href="#i-left"/></svg><i class="sep"></i><svg><use href="#i-ruler"/></svg><i class="grip wide"></i><svg><use href="#i-part"/></svg><svg><use href="#i-group"/></svg>
  </div>
  <div class="toolbar third">
    <i class="grip first"></i><svg><use href="#i-ybox"/></svg><svg><use href="#i-cyl"/></svg><svg><use href="#i-sph"/></svg><svg><use href="#i-cone"/></svg><svg><use href="#i-torus"/></svg><svg><use href="#i-prim"/></svg><svg><use href="#i-shape"/></svg><i class="grip wide"></i><svg><use href="#i-extrude"/></svg><svg><use href="#i-revolve"/></svg><svg><use href="#i-mirror"/></svg><svg><use href="#i-fillet"/></svg><svg><use href="#i-chamfer"/></svg><svg><use href="#i-ruled"/></svg><svg><use href="#i-loft"/></svg><svg><use href="#i-sweep"/></svg><svg><use href="#i-offset"/></svg><i class="dd"></i><svg><use href="#i-thick"/></svg><i class="grip wide"></i><svg><use href="#i-compound"/></svg><i class="dd"></i><svg><use href="#i-bool"/></svg><svg><use href="#i-cutg"/></svg><svg><use href="#i-fuse"/></svg><svg><use href="#i-common"/></svg><svg><use href="#i-connect"/></svg><i class="dd"></i><svg><use href="#i-split"/></svg><i class="dd"></i><svg><use href="#i-check"/></svg><svg><use href="#i-defeat"/></svg><svg><use href="#i-section"/></svg><svg><use href="#i-slices"/></svg><i class="grip wide"></i><svg><use href="#i-tape"/></svg><svg><use href="#i-tape2"/></svg><i class="sep"></i><svg><use href="#i-tapex"/></svg><svg><use href="#i-tapea"/></svg><svg><use href="#i-tapeb"/></svg><svg><use href="#i-tapec"/></svg>
  </div>

  <div class="work">
    <aside class="side">
      <div class="docktitle"><span>Vista combinada</span><svg width="26" height="12" viewBox="0 0 26 12" fill="none" stroke="#555"><rect x=".5" y=".5" width="10" height="10" rx="2"/><path d="M5 3h3.500v3.500H5zM3 5h3.500v3.500H3z" stroke-width=".9"/><rect x="14.500" y=".5" width="10" height="10" rx="2"/><path d="M17 3l5 5m0-5l-5 5" stroke-width="2"/></svg></div>
      <div class="tabs"><span class="tab on">Modelo</span><span class="tab">Tareas</span></div>
      <div class="pane">
        <div class="tree">
          <div class="treebody">
            <div class="treehead">Etiquetas &amp; Atributos</div>
            <div class="row root">Aplicación</div>
            <div class="row l0"><i class="open"></i><svg><use href="#t-doc"/></svg><b>retazo</b></div>
            <div class="row"><i class="shut"></i><svg><use href="#i-part"/></svg><span class="long">SG90 - Micro Servo 9g - Tower Pro</span></div>
            <div class="row"><i class="shut"></i><svg><use href="#t-cut"/></svg>Cut037</div>
            <div class="row"><i class="shut"></i><svg><use href="#t-cut"/></svg>Cut038</div>
            <div class="row off"><i class="open"></i><svg><use href="#t-filletg"/></svg>Fillet</div>
            <div class="row off l2"><i></i><svg><use href="#t-boxg"/></svg>Cubo002</div>
            <div class="row"><i class="shut"></i><svg><use href="#t-cut"/></svg>Cut067</div>
            <div class="row"><i class="shut"></i><svg><use href="#t-fuse"/></svg>Fusion010</div>
            <div class="row"><i class="shut"></i><svg><use href="#t-cut"/></svg>Cut090</div>
            <div class="row"><i class="shut"></i><svg><use href="#t-cut"/></svg>Cut091</div>
            <div class="row"><i class="shut"></i><svg><use href="#t-cut"/></svg>Cut098</div>
            <div class="row"><i></i><svg><use href="#t-boxr"/></svg>Cubo118</div>
          </div>
          <div class="vbar"><i class="btn up"></i><i class="thumb"></i><i class="trough"></i><i class="btn down"></i></div>
          <div class="hbar"><i class="btn lf"></i><i class="thumb"></i><i class="trough"></i><i class="btn rt"></i></div>
          <div class="corner"></div>
        </div>
        <div class="split"></div>
        <div class="props"><div class="inner">
          <div class="phead"><span>Propiedad</span><span>Valor</span></div>
          <div class="group">Base</div>
          <div class="prop"><i></i><span>Shapes</span><em class="wide">[Cubo, Cubo123, Cubo1…</em></div>
          <div class="prop white"><i class="shut"></i><span>Placement</span><em class="wider">[(0,00 0,00 1,00); 0,00 °;…</em></div>
          <div class="prop"><i></i><span>Label</span><em>Fusion016</em></div>
          <div class="group">Boolean</div>
          <div class="prop"><i></i><span>Refine</span><em>false</em></div>
        </div></div>
        <div class="btabs"><span class="btab">Vista</span><span class="btab on">Datos</span></div>
      </div>
    </aside>
    <div class="vsplit"></div>
    <section class="main">
<svg class="scene" width="1085" height="635" viewBox="355 203 1085 635" shape-rendering="crispEdges">
<defs><linearGradient id="sky" gradientUnits="userSpaceOnUse" x1="0" y1="203" x2="0" y2="838"><stop offset="0" stop-color="#333365"/><stop offset="1" stop-color="#acacc5"/></linearGradient></defs>
<path d="M355 203h1085v635H355z" fill="url(#sky)"/>
<g class="ln">
<!-- floating cubes -->
<path class="t" d="M1177 319L1239 310 1290 322 1227 330z"/><path class="l" d="M1177 319L1227 330V409L1177 401z"/><path class="r" d="M1227 330L1290 322 1289 401 1227 409z"/>
<path class="t" d="M1160 417L1243 406 1310 422 1227 433z"/><path class="l" d="M1160 417L1227 433V524L1159 510z"/><path class="r" d="M1227 433L1310 422 1309 514 1227 524z"/>
<!-- far block and lawn -->
<path class="t" d="M1245 552L1441 528V543L1270 565z"/><path class="r" d="M1270 565L1441 543V569L1270 591z"/>
<path fill="#44ff44" d="M1160 602L1270 591 1441 569V748L1353 728V649z"/>
<path class="r" d="M1137 599L1150 597 1173 603 1167 605z"/>
<path class="t" d="M1150 544L1194 539 1275 558 1233 563z"/><path class="l" d="M1150 544L1233 563V616L1150 597z"/><path class="r" d="M1233 563L1275 558V611L1233 616z"/>
<!-- base slabs -->
<path class="l" d="M384 692L1040 839H804L384 745z"/>
<path class="t" d="M915 811L1218 772 1441 821V840H1040z"/>
<path class="t" d="M1218 745L1353 728 1441 747V795z"/><path class="l" d="M1218 745L1441 795V821L1218 772z"/>
<path class="t" d="M386 587L527 569 1137 599 1353 649 915 707z"/>
<path class="l" d="M386 587L915 707V811L386 692z"/><path class="r" d="M915 707L1353 649V728L1218 745V772L915 811z"/>
<path d="M913.500 707v104M917.500 707v103" stroke-width="1.600"/><path d="M915.500 708v102" stroke="#ddd" stroke-width="1.500"/>
<path class="r" d="M1137 599L1150 597 1173 603 1167 604z" stroke-width="1"/>
<!-- upper level -->
<path class="t" d="M526 537L655 518 902 486 1025 512 1150 544 775 591z"/>
<!-- rear left wall -->
<path class="r" d="M528 485L655 469V518L600 525V505z"/><path class="s" d="M597 520V491L611 489V520zM626 521V488L639 486V520z"/><path d="M639 487v32" stroke-width="3"/>
<!-- rear centre walls -->
<path class="r" d="M780 452L902 437V486L780 501z"/><path class="l" d="M902 437L1000 459V508L902 486z"/>
<path class="s" d="M793 500V466L808 464V498zM822 497V463L837 461V495zM852 493V458L866 457V490zM881 489V454L896 452V487zM904 487V453L917 456V490zM928 492V458L941 461V496zM952 498V463L963 466V500zM974 503V469L987 471V505z"/>
<path d="M807 465v33M836 462v33M865 458v33M895 453v33M905 454v33M929 459v33M953 464v33M975 470v33" stroke-width="3"/><path d="M999.500 459v49M781 452L902 437 1000 459M781.500 452v49" stroke-width="3"/><path d="M904 440v46" stroke="#ccc" stroke-width="1"/>
<!-- right walls -->
<path class="l" d="M1048 470L1150 491V498L1048 503z"/><path class="s" d="M1058 503V488L1069 490V502zM1081 500V493L1093 496z"/><path d="M1059 488v15M1048 470L1150 492" stroke-width="3"/>
<path class="l" d="M526 537L775 591V645L526 590z"/><path class="r" d="M775 591L1150 544V597L775 645z"/>
<path class="r" d="M1025 508L1150 492V543L1025 558z"/><path d="M1025 511L1150 495" stroke-width="1.500"/>
<path class="t" d="M1038 556V521L1057 519V553zM1068 552V517L1087 515V550zM1097 548V514L1116 511V545z"/><path class="s" d="M1127 543V510L1146 508V541z"/>
<path class="n" fill="#868686" d="M1070 518h11v8l-11-2zM1099 515h5v17h-5z"/><path class="n" fill="url(#sky)" d="M1107 514h3v17h-3z"/><path d="M1129 510v31M1139 508v33" stroke-width="3"/><path class="n" fill="#2e2e2e" d="M1131 537h7v4l-7 1z"/>
<path class="hi" d="M1026.500 511v46M1055.500 520v33M1085.500 516v33M1114.500 512v33M1143.500 509v31"/><path d="M1053 520v34M1083 516v34M1112 512v34M1028.500 510v47" stroke-width="1.500"/>
<!-- front left wall -->
<path class="l" d="M528 485L629 506V557L528 537z"/><path d="M528 485L629 507" stroke-width="3"/>
<path class="t" d="M533 538V502L548 505V541zM556 543V507L571 511V547zM579 548V513L595 516V551zM602 553V518L618 521V557z"/>
<path class="n" fill="url(#sky)" d="M540 505h7v26l-7 1zM568 511h2v17h-2z"/><path class="n" fill="#a6a6a6" d="M562.500 510h4v19l-4 1zM585 516h8v9l-8 3z"/><path class="hi" d="M535 502v36M558 508v36M581.500 514v34M604.500 519v34M626.500 507v49"/>
<!-- front centre walls -->
<path class="l" d="M677 519L775 542V591L677 570z"/><path class="r" d="M775 542L898 525V575L775 592z"/><path d="M678 523L775 544" stroke-width="1.500"/><path d="M775 542L898 525" stroke-width="2.500"/>
<path class="t" d="M686 571V536L701 539V574zM709 577V542L724 545V580zM732 582V547L748 550V585zM755 587V552L771 555V590zM783 590V555L802 553V587zM812 586V551L832 549V583zM842 582V547L861 545V580zM871 578V543L890 541V576z"/>
<path class="hi" d="M688 537v34M711 543v34M734 548v33M757 553v33M776.500 544v46M800.500 554v33M830 550v33M859.500 546v33M888.500 542v34"/><path d="M797.500 554v34M827.500 550v34M857 546v34M886 542v34" stroke-width="1.500"/>
<!-- pillar feet -->
<path fill="none" stroke-width="1.500" d="M527 536l7 1v2l-7-1zM548 541l8 2v2l-8-2zM571 546l8 2v2l-8-2zM594 551l8 2v2l-8-2zM618 556l8 2v2l-8-2zM678 570l7 2v2l-7-2zM700 575l9 2v2l-9-2zM724 580l8 2v3l-8-2zM747 585l8 2v2l-8-2zM771 590h11v3h-11zM802 587l11-1v3l-10 1zM831 583l11-1v3l-11 1zM861 580l10-2v3l-10 1zM890 576l9-1v2l-9 1zM1028 557l10-1v3l-10 1zM1057 554l11-1v3l-11 1zM1087 550l10-1v3l-10 1zM1116 547l10-1v3l-10 1zM1144 543h7v2h-7z"/>
</g>
<!-- navigation cube -->
<g fill="#e2e8f1"><path d="M1357.500 211l8.500 9h-17zM1357.500 361l8.500-9h-17zM1283 286l8-9v18zM1432 286l-9-9v18z"/><path d="M1303 243l1-10 3 3c7-8 17-14 28-18l1 5c-10 3-19 9-26 16l3 3zM1411 243l-2-10-3 3c-7-8-16-14-26-18l-2 5c10 3 18 9 25 16l-3 3z"/>
<path d="M1324 254l26-1 43 2 6 8 1 42-3 9-6 7-41 9-27-9-6-13V265z"/></g>
<path d="M1319 264l24-1 3 10v47l-5 4-22-10zM1359 264l36-1 3 5v42l-5 6-35 10z" fill="#f9fafd"/><ellipse cx="1352" cy="260" rx="10" ry="8" fill="#f9fafd"/><ellipse cx="1352" cy="325" rx="9" ry="5" fill="#f9fafd"/>
<path d="M1326 255l29 2M1366 257l26 1M1346 306l8-2" stroke="#444477" stroke-width="1.500"/><path d="M1360 265l1 30M1327 310l18-4M1365 304l24 9" stroke="#cfcfde" fill="none" stroke-width="2"/>
<g class="navt"><text transform="translate(1323 294) skewY(12) scale(.55 1)">Lef,</text><text transform="translate(1364 300) skewY(-8) scale(.64 1)">Front</text></g>
<path d="M1350.500 253v81" stroke="#00f"/><path d="M1350 334L1399 316" stroke="#f00"/><path d="M1350 334L1317 312M1316 310l4 5" stroke="#0f0"/>
<path d="M1352 242.500h5l-5 6h5" stroke="#2222ee" fill="none"/><path d="M1406 313l5 7m0-7l-5 7" stroke="#e00"/>
<path d="M1383 337l11-5 12 4-11 5z" fill="#f4f4f4"/><path d="M1383 337l12 4v14l-12-5z" fill="#bbb"/><path d="M1395 341l11-5v14l-11 5z" fill="#ddd"/><path d="M1410 340h14l-7 7z" fill="#444"/>
<!-- axis cross -->
<path d="M1408.500 806v-20" stroke="#2121a0" stroke-width="2"/><path d="M1406 791l2.500-7 2.500 7z" fill="#2121a0"/><path d="M1409 806l13-1" stroke="#8a2020" stroke-width="2"/><path d="M1416 802l6 3-6 2z" fill="#8a2020"/><path d="M1408 806l-10-2" stroke="#228022" stroke-width="2"/><path d="M1411 777.500h5l-5 6h5M1400 797l2.500 4 2.500-4M1402.500 801v3M1425 798l5 7m0-7l-5 7" fill="none" stroke="#111"/>
</svg>
      <div class="doctabs"><div class="dt d1"><svg><use href="#fc"/></svg><span>Página de inicio</span><svg><use href="#close"/></svg></div><div class="dt d2 on"><svg><use href="#fc"/></svg><span>retazo : 1</span><svg><use href="#close"/></svg></div><div class="dt d3"><svg><use href="#fc"/></svg><span>definitivo : 1</span><svg><use href="#close"/></svg></div></div>
    </section>
  </div>
  <footer class="status"><span class="msg">Preselected: Fusion017 - retazo.Fusion017.Face77 (173.726, 573, 108.709)</span><svg width="10" height="14" viewBox="0 0 10 14" fill="none" stroke="#333"><rect x=".8" y=".8" width="8.400" height="12.400" rx="3"/><path d="M5 3v4M2.500 3v4M7.500 3v4" stroke-width=".8"/></svg><span class="nav">Blender</span><i></i><span class="dim">406,71 mm x 238,03 mm</span></footer>
</main>
</div>
</body>
</html>
```
FILE: styles.css
```css
* { box-sizing: border-box; }
body { margin: 0; width: 1440px; height: 900px; overflow: hidden; font: 14.4px/20px "Noto Sans", sans-serif; color: #000; background: #efefef; }
i, em { font-style: normal; }
svg { display: block; flex: none; }
.defs { position: absolute; }

.topbar { height: 27px; background: #1d1d1d; color: #e6e6e6; display: flex; align-items: center; padding-left: 12px; }
.topbar span { padding-bottom: 1px; }
.activities { width: 113px; letter-spacing: .13px; }
.appicon { margin-right: 6px; }
.appname { width: 63px; letter-spacing: -.1px; }
.tri { width: 0; height: 0; border: 5px solid transparent; border-bottom: 0; border-top-color: #555; }
.tri.light { border-top-color: #eee; }
.clock { margin-left: 475px; width: 115px; white-space: nowrap; letter-spacing: -.29px; }
.tray { margin-left: auto; margin-right: 13px; }

.desktop { display: flex; height: 873px; }
.dock { width: 58px; background: linear-gradient(#585858, #3c3c3c 65%, #3b3b3b); border-right: 1px solid #222; padding-top: 4px; display: flex; flex-direction: column; align-items: center; }
.app { width: 50px; height: 50px; margin-bottom: 4px; display: flex; align-items: center; justify-content: center; border-radius: 4px; position: relative; }
.app.active { background: #646464; }
.app.run::before { content: ""; position: absolute; left: 0; top: 23px; width: 4px; height: 4px; border-radius: 50%; background: #e95420; }
.help span { width: 32px; height: 32px; border-radius: 50%; background: linear-gradient(#1c7fd2 50%, #3d9ee2 50%); color: #fff; font-size: 24px; line-height: 31px; text-align: center; }
.term span { width: 32px; height: 27px; border: 1px solid #5c5c5c; border-radius: 3px; background: #303030; color: #ddd; font: 9px/13px "DejaVu Sans Mono", monospace; padding-left: 4px; }
.grid { margin-top: auto; margin-bottom: 15px; }

.window { flex: 1; display: flex; flex-direction: column; min-width: 0; background: #efefef; }
.titlebar { height: 37px; background: #2c2c2c; border-top: 1px solid #3a3a3a; color: #f2f2f2; display: flex; align-items: center; padding-left: 637px; font-size: 14px; }
.titlebar b { white-space: nowrap; letter-spacing: .36px; }
.winbtns { margin-left: auto; margin-right: 0; }
.menubar { height: 22px; display: flex; padding-left: 10px; line-height: 22px; border-bottom: 1px solid #d2d2d2; white-space: nowrap; }
.menubar u { text-decoration-thickness: 1px; text-underline-offset: 2px; }
.m1 { width: 66px; letter-spacing: .1px; } .m2 { width: 55px; letter-spacing: .1px; } .m3 { width: 38px; letter-spacing: .1px; } .m4 { width: 107px; } .m5 { width: 57px; } .m6 { width: 51px; letter-spacing: .1px; } .m7 { width: 73px; } .m8 { width: 78px; letter-spacing: .1px; }

.toolbar { height: 39px; display: flex; align-items: center; background: linear-gradient(#f9f9f9, #efefef); border-bottom: 1px solid #b4b4b4; }
.toolbar > svg { width: 24px; height: 24px; margin: 0 4.500px; }
.toolbar.third { border-bottom-color: #c0c0c0; }
.sep { width: 1px; height: 20px; background: #d4d4d4; margin: 0 3px; }
.grip { width: 16px; height: 18px; background: radial-gradient(circle, #a8a8a8 .7px, transparent .9px) 8px 0 / 4px 4px; background-clip: content-box; padding-left: 8px; padding-right: 3px; }
.grip.last { width: 17px; }
.second .grip.wide { width: 15.500px; }
.third .grip.wide { width: 15.500px; }
.third .dd { width: 12.500px; }
.grip.first { width: 12.500px; padding-left: 4px; padding-right: 3px; background-position: 0 0; }
.dd { width: 12px; height: 5px; display: flex; }
.dd::before { content: ""; border: 4px solid transparent; border-bottom: 0; border-top-color: #5a5a5a; margin-left: 1px; }
.dd.off::before { border-top-color: #c4c4c4; }
.combo { width: 189px; height: 25px; border: 1px solid #a8a8a8; border-radius: 3px; background: linear-gradient(#fff, #f8f8f8); display: flex; align-items: center; padding: 0 6px 0 4px; }
.combo svg { width: 18px; height: 18px; margin-right: 3px; }
.combo .tri { margin-left: auto; border-width: 5px 4.500px 0; }

.work { height: 665px; display: flex; }
.side { width: 292px; height: 667px; padding-left: 1px; padding-right: 1px; display: flex; flex-direction: column; }
.docktitle { height: 19px; display: flex; align-items: center; justify-content: space-between; padding: 0 1px 0 3px; }
.docktitle span { letter-spacing: -.03px; }
.tabs { height: 28px; display: flex; align-items: flex-end; position: relative; z-index: 1; margin-bottom: -1px; }
.tab { width: 69px; height: 25px; margin-bottom: 1px; border: 1px solid #b6b6b6; border-left: 0; border-bottom: 0; border-radius: 2px 2px 0 0; background: #e2e2e2; text-align: center; line-height: 26px; letter-spacing: -.1px; }
.tab.on { width: 76px; height: 28px; margin: 0; border-left: 1px solid #b6b6b6; background: #fbfbfb; line-height: 28px; padding-right: 2px; letter-spacing: .1px; }
.pane { height: 620px; border: 1px solid #b4b4b4; background: #fafafa; }
.tree { width: 287px; height: 283px; border: 1px solid #aaa; background: #fff; display: grid; grid-template: 267px 14px / 271px 14px; }
.treebody { overflow: hidden; }
.treehead { height: 21px; background: linear-gradient(#fcfcfc, #ededed); border-bottom: 1px solid #aaa; padding-left: 2px; line-height: 23px; letter-spacing: .03px; }
.row { height: 19px; display: flex; align-items: center; padding-left: 20px; white-space: nowrap; line-height: 19px; }
.row.root { height: 18px; padding-left: 3px; }
.row.l0 { padding-left: 0; }
.row.l2 { padding-left: 40px; }
.row.off { color: #bebebe; }
.row svg { width: 16px; height: 16px; margin-right: 6px; }
.row > i { width: 23px; height: 9px; flex: none; display: flex; align-items: center; }
.open::before { content: ""; border: 4px solid transparent; border-bottom: 0; border-top: 5px solid #555; margin-left: 6px; }
.shut::before { content: ""; border: 4px solid transparent; border-right: 0; border-left: 4px solid #555; margin-left: 8px; }
.long { letter-spacing: -.03px; }
.vbar, .hbar { display: flex; background: #fafafa; }
.vbar { flex-direction: column; border-left: 1px solid #b4b4b4; }
.hbar { border-top: 1px solid #b4b4b4; }
.corner { border: 1px solid #b4b4b4; border-width: 1px 0 0 1px; background: #f4f4f4; }
.btn { width: 13px; height: 13px; display: flex; align-items: center; justify-content: center; background: #fafafa; }
.btn::before { content: ""; border: 4px solid transparent; }
.up::before { border-top: 0; border-bottom-color: #555; }
.down::before { border-bottom: 0; border-top-color: #555; }
.lf::before { border-left: 0; border-right-color: #555; }
.rt::before { border-right: 0; border-left-color: #555; }
.vbar .thumb { height: 153px; border: 1px solid #b4b4b4; border-width: 1px 0; }
.vbar .trough { height: 88px; background: #e3e3e3; border-bottom: 1px solid #b4b4b4; }
.hbar .thumb { width: 222px; border: 1px solid #b4b4b4; border-width: 0 1px; }
.hbar .trough { width: 22px; background: #e3e3e3; border-right: 1px solid #b4b4b4; }
.split { height: 4px; background: radial-gradient(circle, #999 .7px, transparent .9px) 0 0 / 3px 3px; margin: 0 134px 0 136px; }
.props { width: 287px; height: 304px; border: 1px solid #aaa; padding: 1px; background: #fff; }
.inner { height: 300px; border: 1px solid #bbb; }
.phead { display: grid; grid-template-columns: 100px 1fr; height: 21px; line-height: 22px; background: linear-gradient(#fcfcfc, #ededed); border-bottom: 1px solid #bbb; }
.phead span { padding-left: 2px; border-right: 1px solid #ccc; }
.group { height: 22px; background: #9f9f9f; color: #f4f4f4; font-weight: 700; font-size: 14px; line-height: 23px; padding-left: 23px; letter-spacing: .15px; }
.prop { height: 22px; display: grid; grid-template-columns: 20px 80px 1fr; background: #f6f6f6; line-height: 21px; }
.prop.white { background: #fff; }
.prop i { display: flex; align-items: center; }
.prop span, .prop em { border: 1px solid #c2c2c2; border-width: 0 1px 1px 0; padding-left: 3px; padding-top: 1px; height: 22px; white-space: nowrap; letter-spacing: -.02px; }
.prop em.wide { letter-spacing: .07px; }
.prop em.wider { letter-spacing: .15px; }
.btabs { display: flex; align-items: flex-start; }
.btab { width: 59px; height: 24px; border: 1px solid #b0b0b0; border-top: 0; background: #e5e5e5; border-radius: 0 0 3px 3px; text-align: center; line-height: 24px; letter-spacing: .15px; }
.btab.on { width: 63px; background: #fff; line-height: 27px; margin-top: -1px; height: 27px; position: relative; letter-spacing: 0; }
.vsplit { width: 5px; background: radial-gradient(circle, #999 .7px, transparent .9px) 1px 0 / 3px 3px content-box; padding: 327px 1px 320px; }
.main { width: 1085px; }
.scene { display: block; }
.ln { stroke: #191919; stroke-width: 2; fill: none; }
.ln .t { fill: #2e2e2e; } .ln .l { fill: #868686; } .ln .r { fill: #a6a6a6; } .ln .s { fill: url(#sky); }
.ln .n { stroke: none; }
.ln .hi { stroke: #d2d2d2; }
.navt { font: 19px "Liberation Sans", sans-serif; fill: #000; }
.doctabs { height: 30px; border-top: 1px solid #b0b0b0; margin-top: 1px; display: flex; align-items: flex-start; }
.dt { height: 27px; background: #dedede; border: 1px solid #b4b4b4; border-top: 0; border-radius: 0 0 3px 3px; display: flex; align-items: center; padding-left: 11px; white-space: nowrap; }
.dt svg { width: 16px; height: 16px; }
.dt span { margin-left: 4px; margin-right: auto; padding-top: 1px; letter-spacing: -.05px; }
.dt.on { height: 29px; background: #f8f8f8; }
.d1 { width: 174px; padding-right: 14px; } .d2 { width: 132px; padding-right: 15px; } .d3 { width: 152px; padding-right: 14px; }

.status { margin-top: 7px; height: 22px; display: flex; align-items: center; padding-left: 6px; white-space: nowrap; }
.msg { width: 1124px; letter-spacing: .07px; }
.nav { margin-left: 4px; width: 55px; letter-spacing: .1px; }
.status i { border: 3px solid transparent; border-bottom: 0; border-top-color: #555; }
.dim { margin-left: 11px; letter-spacing: -.04px; }
```
